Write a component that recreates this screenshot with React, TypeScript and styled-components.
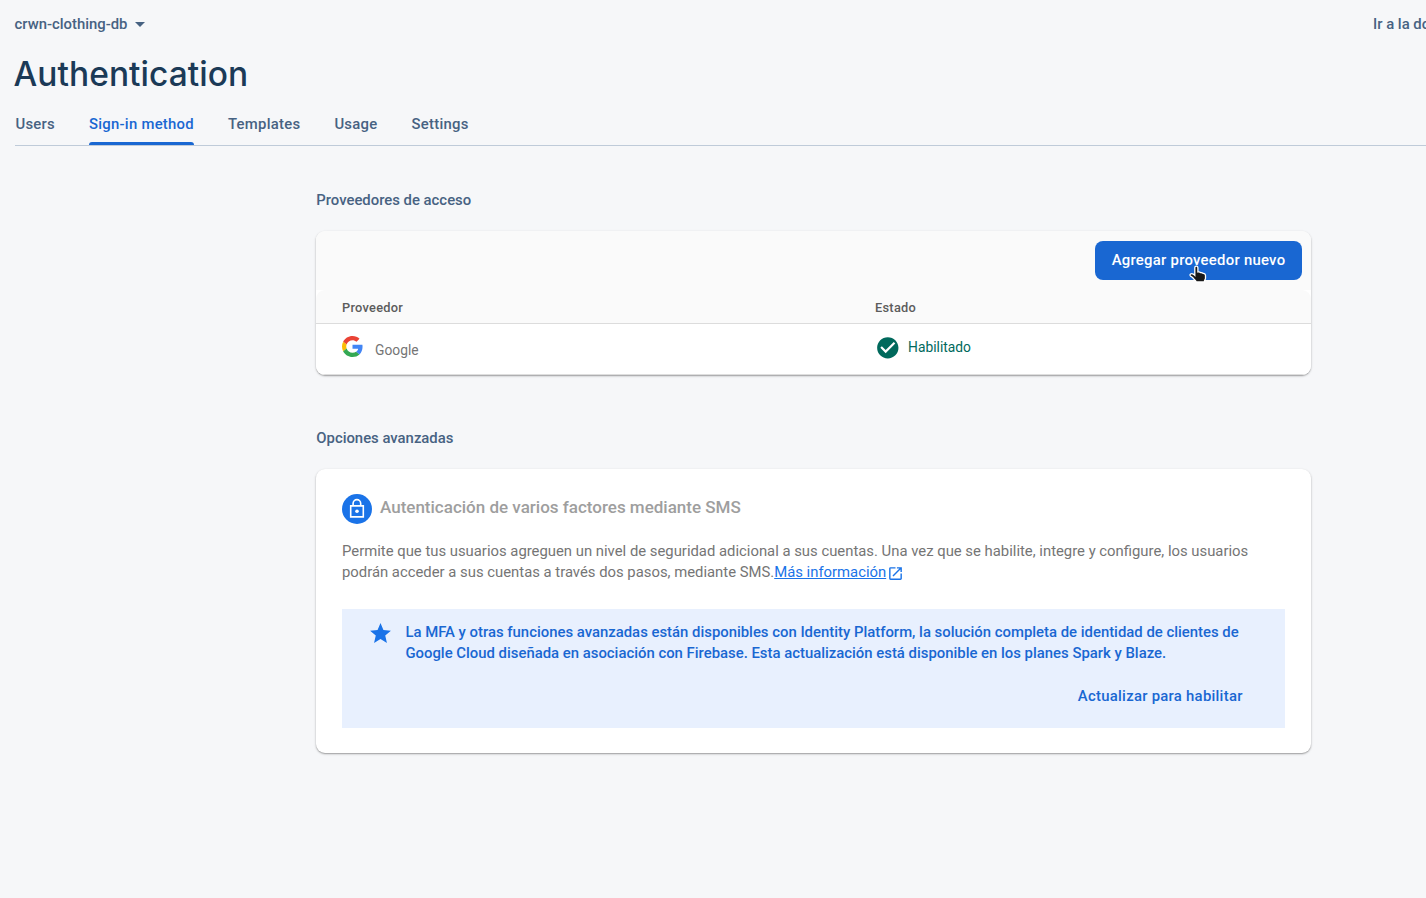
import React from "react";
import styled, { createGlobalStyle } from "styled-components";

const GlobalStyle = createGlobalStyle`
  *, *::before, *::after { box-sizing: border-box; }
  html, body { margin: 0; background: #f6f7f9; }
  body { font-family: Roboto, sans-serif; overflow: hidden; }
  h1, h2, h3, p { margin: 0; }
  button { font-family: inherit; }
`;

const Page = styled.div`
  height: 898px;
  overflow: hidden;
  background: #f6f7f9;
  color: #476282;
`;

const TopBar = styled.header`
  display: flex;
  justify-content: space-between;
  align-items: center;
  height: 48px;
  padding-left: 14.5px;
  font-size: 14.86px;
  font-weight: 500;
  white-space: nowrap;
`;

const ProjectPicker = styled.div`
  display: flex;
  align-items: center;
  gap: 7.5px;
`;

const Caret = styled.span`
  width: 0;
  height: 0;
  margin-top: 1px;
  border: 5.3px solid transparent;
  border-top-color: currentColor;
  border-bottom: 0;
`;

const DocsLink = styled.a`
  width: 53px;
  overflow: hidden;
`;

const Title = styled.h1`
  height: 52px;
  padding-left: 13.5px;
  color: #1b3a57;
  font: 500 33.5px/52px Inter, sans-serif;
  letter-spacing: 0.05px;
`;

const TabBar = styled.nav`
  display: flex;
  gap: 34px;
  height: 46px;
  margin-left: 15px;
  border-bottom: 1px solid #bfcbd9;
`;

const Tab = styled.a<{ $active?: boolean }>`
  display: flex;
  flex-direction: column;
  justify-content: space-between;
  color: ${({ $active }) => ($active ? "#1967d2" : "#476282")};
  font-size: 14.86px;
  font-weight: 500;
  line-height: 48px;
  letter-spacing: 0.27px;
  white-space: nowrap;

  &:first-child {
    padding-left: 0.4px;
  }

  &::after {
    content: "";
    flex: none;
    height: 3px;
    margin-top: -6px;
    border-radius: 3px 3px 0 0;
    background: ${({ $active }) => ($active ? "#1967d2" : "transparent")};
  }
`;

const Content = styled.main`
  width: 995px;
  margin-left: 316px;
  padding-top: 42px;
`;

const Section = styled.section`
  margin-bottom: 51px;
`;

const SectionTitle = styled.h2`
  height: 43px;
  padding-left: 0.3px;
  color: #476282;
  font-size: 14.87px;
  font-weight: 500;
  line-height: 24px;
`;

const Card = styled.div`
  overflow: hidden;
  border-radius: 9px;
  background: #fff;
  box-shadow: 0 1px 1px rgba(0, 0, 0, 0.14), 0 1px 2px rgba(0, 0, 0, 0.14),
    0 1px 3px rgba(0, 0, 0, 0.14);
`;

const Toolbar = styled.div`
  display: flex;
  justify-content: flex-end;
  height: 59px;
  padding: 10px 9px;
  background: #fafafa;
`;

const PrimaryButton = styled.button`
  position: relative;
  width: 207px;
  height: 39px;
  padding: 0 0 2px;
  border: 0;
  border-radius: 8px;
  background: #1967d2;
  color: #fff;
  font-size: 14.86px;
  font-weight: 500;
  letter-spacing: 0.27px;
  white-space: nowrap;
`;

const Pointer = styled.svg`
  position: absolute;
  left: 93px;
  top: 23.5px;
  width: 22px;
  height: 21px;
`;

const HeadRow = styled.div`
  display: grid;
  grid-template-columns: 533px 1fr;
  height: 34px;
  padding-left: 26px;
  border-bottom: 1px solid #dcdcdc;
  border-radius: 9px 9px 0 0;
  background: #fafafa;
  color: #5c5c5c;
  font-size: 12.8px;
  font-weight: 500;
  line-height: 36px;
  letter-spacing: 0.27px;
`;

const TableBody = styled.div`
  background: #fff;
`;

const ProviderRow = styled.div`
  display: grid;
  grid-template-columns: 533px 1fr;
  height: 51px;
  padding-left: 26px;
  border-bottom: 1px solid #dedede;
  font-size: 13.8px;
`;

const Provider = styled.div`
  display: flex;
  gap: 12px;
  padding-top: 12px;
  color: #757575;
  line-height: 29px;
`;

const Status = styled.div`
  display: flex;
  gap: 7.5px;
  padding-top: 11.4px;
  color: #00695c;
  line-height: 24px;
`;

const Advanced = styled(Card)`
  height: 284px;
  padding: 25px 26px;
`;

const FeatureHeader = styled.div`
  display: flex;
  gap: 8px;
  height: 47px;
`;

const FeatureTitle = styled.h3`
  color: #9e9e9e;
  font-size: 17px;
  font-weight: 500;
  line-height: 27px;
`;

const Description = styled.p`
  height: 68px;
  color: #757575;
  font-size: 14.857px;
  line-height: 21.4px;
  white-space: nowrap;
`;

const MoreLink = styled.a`
  color: #1a73e8;
  text-decoration: underline;
`;

const ExternalIcon = styled.svg`
  width: 17px;
  height: 17px;
  margin-left: 1px;
  vertical-align: -5px;
`;

const Notice = styled.div`
  display: grid;
  grid-template-columns: 25px 1fr;
  grid-template-rows: 76px auto;
  column-gap: 12.9px;
  height: 119px;
  padding: 12px 42.3px 0 25.5px;
  background: #e8f0fe;
  color: #1967d2;
  font-size: 14.88px;
  font-weight: 500;
  line-height: 21.4px;
  white-space: nowrap;
`;

const NoticeText = styled.p`
  padding-top: 1px;
`;

const UpgradeButton = styled.button`
  grid-column: 1 / -1;
  justify-self: end;
  align-self: start;
  height: 21px;
  margin-top: -11px;
  padding: 0;
  border: 0;
  background: none;
  color: inherit;
  font-size: 14.86px;
  font-weight: 500;
  line-height: 21px;
  letter-spacing: 0.27px;
`;

const Icon = styled.svg<{ $size: number }>`
  flex: none;
  width: ${({ $size }) => $size}px;
  height: ${({ $size }) => $size}px;
`;

const tabs = ["Users", "Sign-in method", "Templates", "Usage", "Settings"];

export default function App() {
  return (
    <>
      <GlobalStyle />
      <Page>
        <TopBar>
          <ProjectPicker>
            crwn-clothing-db <Caret />
          </ProjectPicker>
          <DocsLink>Ir a la documentación</DocsLink>
        </TopBar>
        <Title>Authentication</Title>
        <TabBar>
          {tabs.map((tab) => (
            <Tab key={tab} $active={tab === "Sign-in method"}>
              {tab}
            </Tab>
          ))}
        </TabBar>
        <Content>
          <Section>
            <SectionTitle>Proveedores de acceso</SectionTitle>
            <Card>
              <Toolbar>
                <PrimaryButton>
                  Agregar proveedor nuevo
                  <Pointer viewBox="0 0 22 21">
                    <path
                      d="M6.8 2.8c0-1.1.8-1.7 1.6-1.7s1.5.6 1.5 1.7v4.1c1.4-.3 2.2.1 2.7.7 1.2-.2 2 .2 2.5.8 1.6-.1 2.4.8 2.4 2.1v2.8c0 1.1-1.2 2.2-1.2 3.6H8.2c0-1.4-2.2-2.4-3.3-4.1l-2.5-1.9c-.7-.8-.4-1.5.2-1.9 1.1-.7 2.8-.1 4.2 1.4z"
                      fill="#181818"
                      stroke="#fff"
                      strokeWidth="1.3"
                    />
                  </Pointer>
                </PrimaryButton>
              </Toolbar>
              <TableBody>
                <HeadRow>
                  <span>Proveedor</span>
                  <span>Estado</span>
                </HeadRow>
                <ProviderRow>
                  <Provider>
                    <Icon $size={21} viewBox="0 0 48 48">
                      <path fill="#EA4335" d="M24 9.5c3.54 0 6.71 1.22 9.21 3.6l6.85-6.85C35.9 2.38 30.47 0 24 0 14.62 0 6.51 5.38 2.56 13.22l7.98 6.19C12.43 13.72 17.74 9.5 24 9.5z" />
                      <path fill="#4285F4" d="M46.98 24.55c0-1.57-.15-3.09-.38-4.55H24v9.02h12.94c-.58 2.96-2.26 5.48-4.78 7.18l7.73 6c4.51-4.18 7.09-10.36 7.09-17.65z" />
                      <path fill="#FBBC05" d="M10.53 28.59c-.48-1.45-.76-2.99-.76-4.59s.27-3.14.76-4.59l-7.98-6.19C.92 16.46 0 20.12 0 24c0 3.88.92 7.54 2.56 10.78l7.97-6.19z" />
                      <path fill="#34A853" d="M24 48c6.48 0 11.93-2.13 15.89-5.81l-7.73-6c-2.15 1.45-4.92 2.3-8.16 2.3-6.26 0-11.57-4.22-13.47-9.91l-7.98 6.19C6.51 42.62 14.62 48 24 48z" />
                    </Icon>
                    Google
                  </Provider>
                  <Status>
                    <Icon $size={25.6} viewBox="0 0 24 24">
                      <path fill="#00695c" d="M12 2C6.48 2 2 6.48 2 12s4.48 10 10 10 10-4.48 10-10S17.52 2 12 2zm-2 15l-5-5 1.41-1.41L10 14.17l7.59-7.59L19 8l-9 9z" />
                    </Icon>
                    Habilitado
                  </Status>
                </ProviderRow>
              </TableBody>
            </Card>
          </Section>
          <Section>
            <SectionTitle>Opciones avanzadas</SectionTitle>
            <Advanced>
              <FeatureHeader>
                <Icon $size={30} viewBox="0 0 30 30">
                  <circle cx="15" cy="15" r="15" fill="#1a73e8" />
                  <g fill="none" stroke="#fff" strokeWidth="1.6">
                    <path d="M8.7 11.9h12.6v11H8.7zM11.1 11.8V9.4a3.8 3.8 0 0 1 7.6 0v2.4" />
                  </g>
                  <circle cx="15" cy="17.3" r="1.8" fill="#fff" />
                </Icon>
                <FeatureTitle>Autenticación de varios factores mediante SMS</FeatureTitle>
              </FeatureHeader>
              <Description>
                Permite que tus usuarios agreguen un nivel de seguridad adicional a sus cuentas. Una vez que se habilite, integre y configure, los usuarios
                <br />
                podrán acceder a sus cuentas a través dos pasos, mediante SMS.
                <MoreLink>Más información</MoreLink>
                <ExternalIcon viewBox="0 0 24 24" fill="#1a73e8">
                  <path d="M19 19H5V5h7V3H5a2 2 0 0 0-2 2v14a2 2 0 0 0 2 2h14c1.1 0 2-.9 2-2v-7h-2v7zM14 3v2h3.59l-9.83 9.83 1.41 1.41L19 6.41V10h2V3h-7z" />
                </ExternalIcon>
              </Description>
              <Notice>
                <Icon $size={25} viewBox="0 0 24 24" fill="#1a73e8">
                  <path d="M12 17.27 18.18 21l-1.64-7.03L22 9.24l-7.19-.61L12 2 9.19 8.63 2 9.24l5.46 4.73L5.82 21z" />
                </Icon>
                <NoticeText>
                  La MFA y otras funciones avanzadas están disponibles con Identity Platform, la solución completa de identidad de clientes de
                  <br />
                  Google Cloud diseñada en asociación con Firebase. Esta actualización está disponible en los planes Spark y Blaze.
                </NoticeText>
                <UpgradeButton>Actualizar para habilitar</UpgradeButton>
              </Notice>
            </Advanced>
          </Section>
        </Content>
      </Page>
    </>
  );
}
